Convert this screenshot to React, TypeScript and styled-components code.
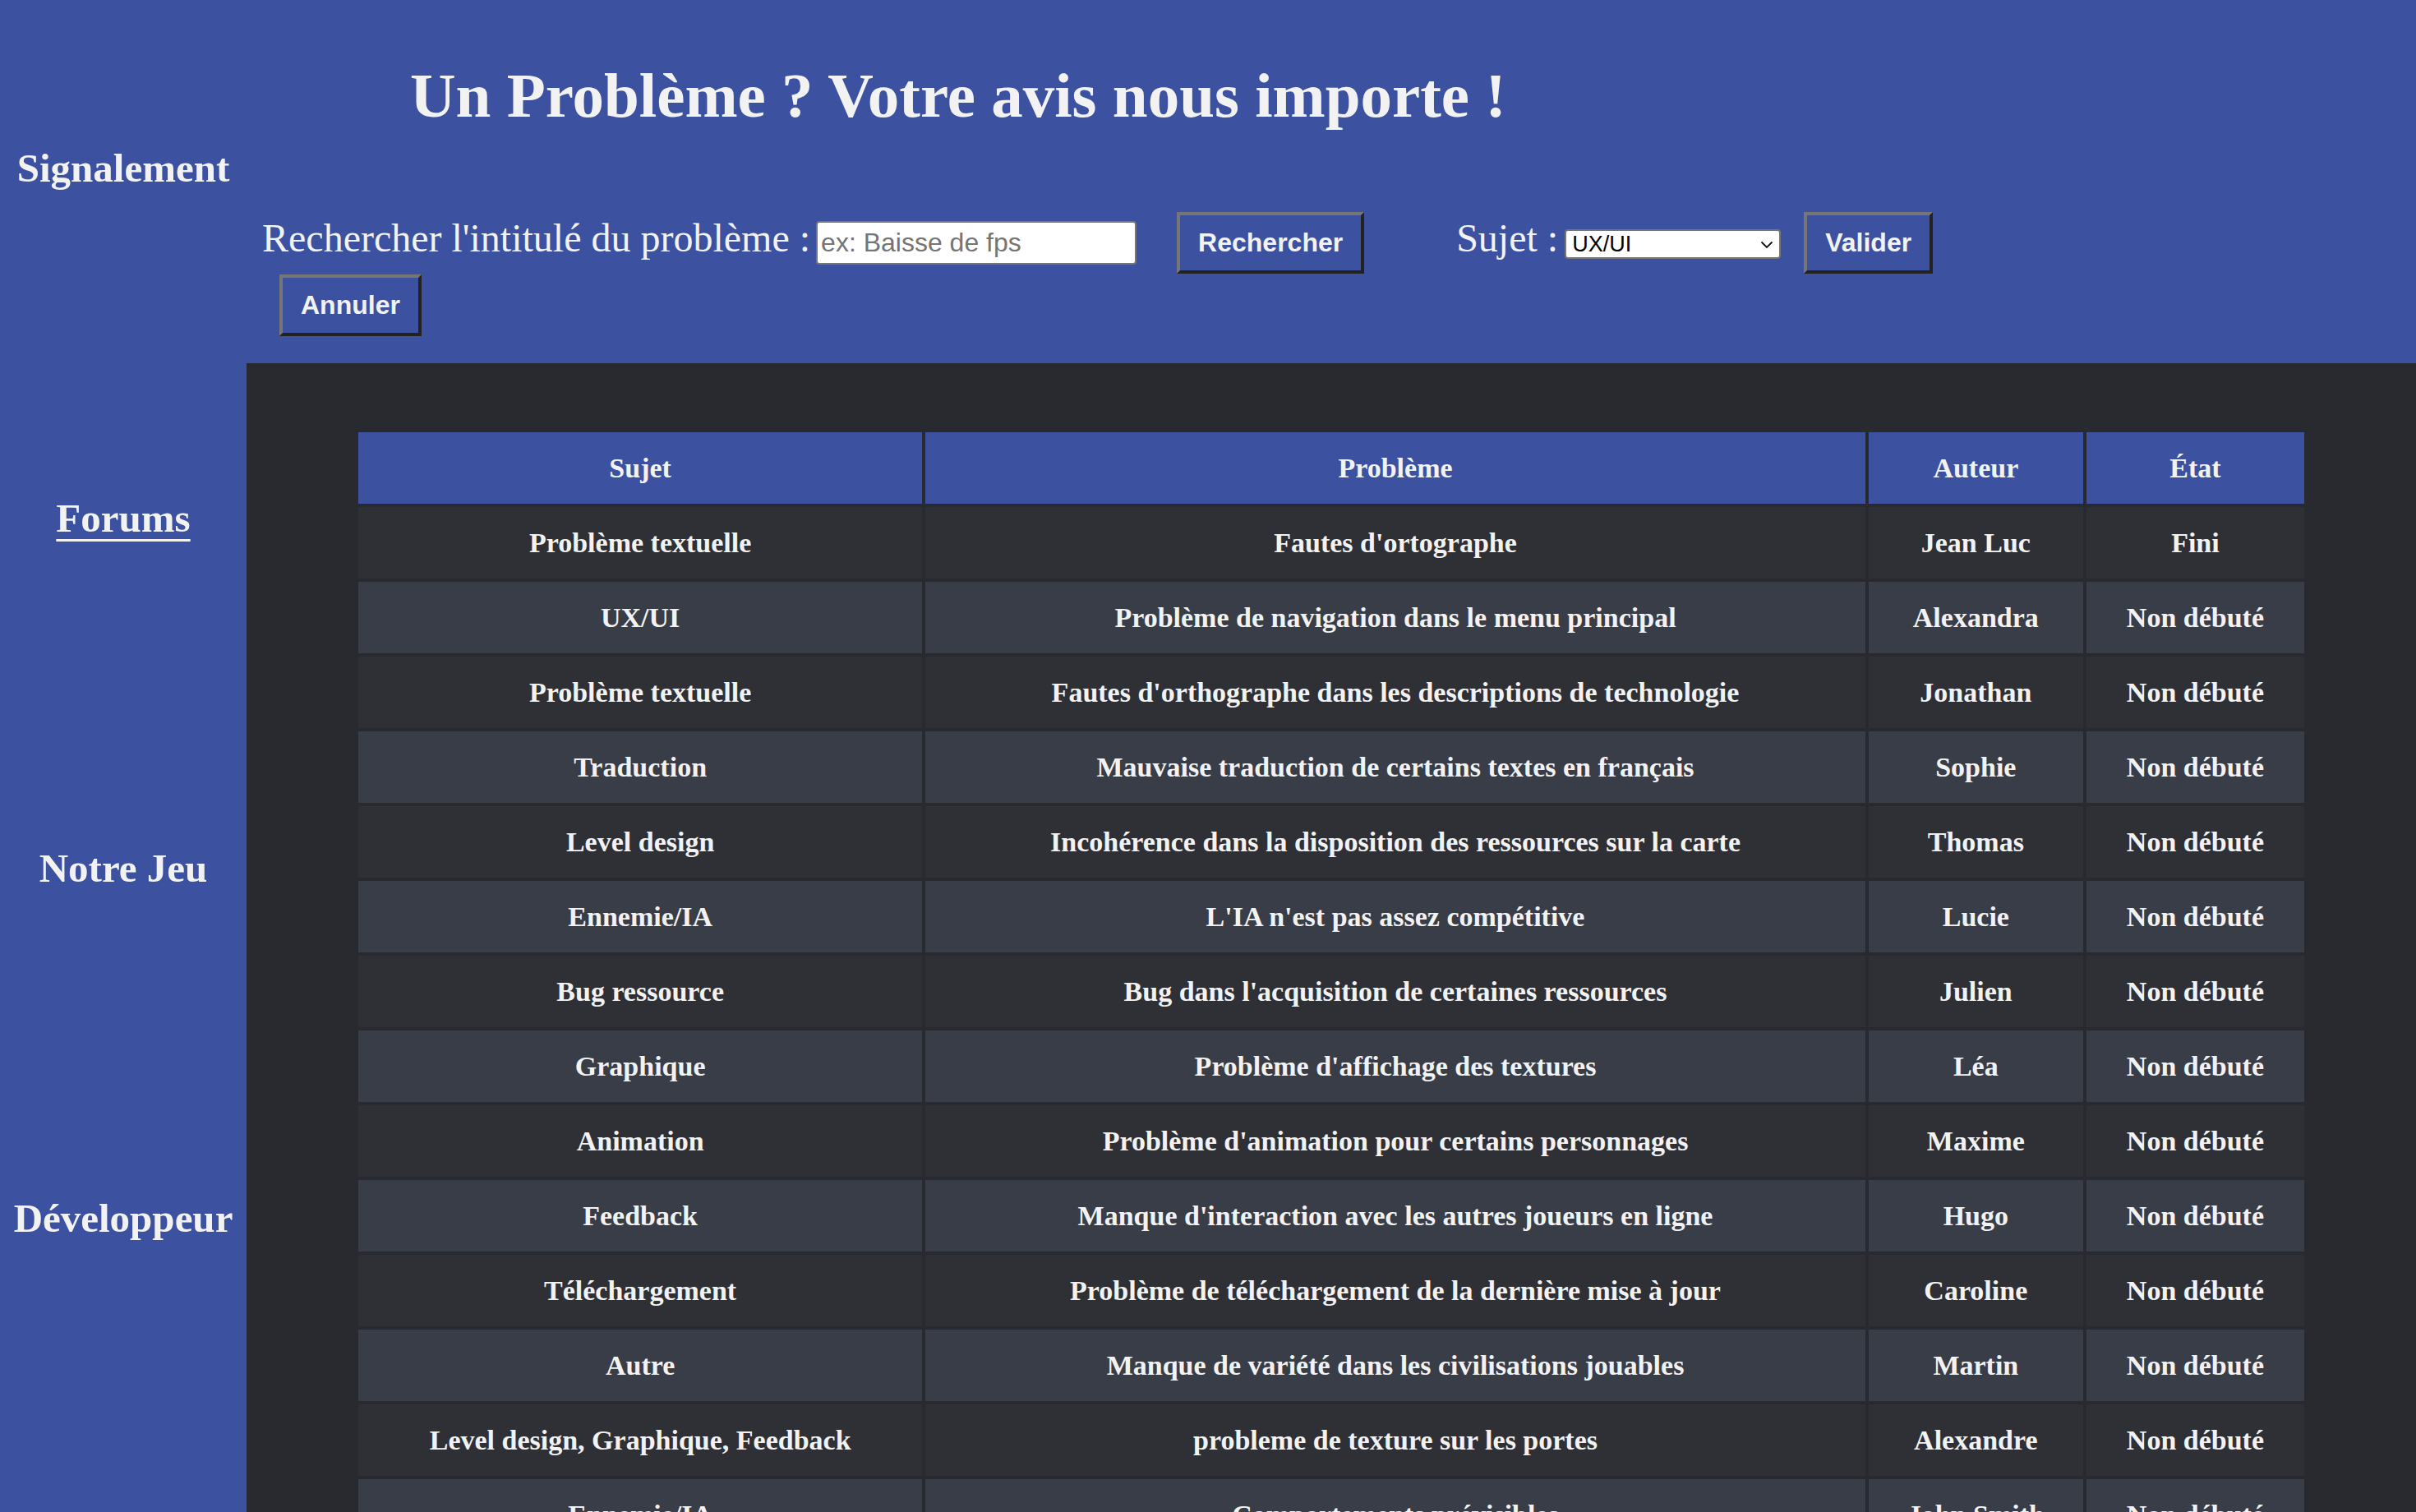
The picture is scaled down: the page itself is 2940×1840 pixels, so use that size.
import React from "react";
import styled, { createGlobalStyle } from "styled-components";

const BLUE = "#3c52a0";
const INK = "#f2f2f2";

const GlobalStyle = createGlobalStyle`
  html, body {
    margin: 0;
    padding: 0;
    background: ${BLUE};
  }
  body {
    font-family: "Liberation Serif", "Times New Roman", serif;
    color: ${INK};
  }
  * { box-sizing: border-box; }
`;

const Page = styled.div`
  display: flex;
  min-height: 100vh;
  background: ${BLUE};
`;

const Sidebar = styled.nav`
  flex: 0 0 300px;
  width: 300px;
  display: flex;
  flex-direction: column;
  align-items: center;
  gap: 370px;
  padding-top: 177px;
  background: ${BLUE};
`;

const NavLink = styled.a<{ $active?: boolean }>`
  font-family: "Liberation Serif", "Times New Roman", serif;
  font-weight: 700;
  font-size: 49px;
  line-height: 56px;
  color: ${INK};
  white-space: nowrap;
  text-decoration: ${(p) => (p.$active ? "underline" : "none")};
  text-decoration-thickness: 3px;
  text-underline-offset: 9px;
  cursor: pointer;
`;

const Main = styled.main`
  flex: 1;
  display: flex;
  flex-direction: column;
  min-width: 0;
`;

const Header = styled.header`
  padding: 78px 0 33px 19px;
  background: ${BLUE};
`;

const Title = styled.h1`
  margin: 0 0 0 180px;
  font-family: "Liberation Serif", "Times New Roman", serif;
  font-weight: 700;
  font-size: 77px;
  line-height: 76px;
  color: ${INK};
  white-space: nowrap;
`;

const FormRow = styled.div<{ $first?: boolean }>`
  display: flex;
  align-items: baseline;
  margin-top: ${(p) => (p.$first ? "104px" : "1px")};
`;

const Label = styled.label<{ $offset?: number }>`
  font-family: "Liberation Serif", "Times New Roman", serif;
  font-weight: 400;
  font-size: 48px;
  line-height: 56px;
  color: ${INK};
  white-space: nowrap;
  margin-left: ${(p) => p.$offset ?? 0}px;
`;

const TextInput = styled.input`
  width: 390px;
  height: 53px;
  margin-left: 7px;
  padding: 2px 4px;
  border: 2px solid #767676;
  border-radius: 4px;
  background: #ffffff;
  color: #111;
  font-family: "Liberation Sans", Arial, sans-serif;
  font-size: 32px;
  &::placeholder {
    color: #757575;
  }
`;

const Button = styled.button<{ $offset?: number }>`
  margin-left: ${(p) => p.$offset ?? 0}px;
  padding: 15px 22px;
  border-width: 4px;
  border-style: solid;
  border-color: #767676 #222222 #222222 #767676;
  background: ${BLUE};
  color: ${INK};
  font-family: "Liberation Sans", Arial, sans-serif;
  font-weight: 700;
  font-size: 32px;
  line-height: 37px;
  cursor: pointer;
`;

const SelectWrap = styled.span`
  position: relative;
  display: inline-flex;
  margin-left: 8px;
`;

const Select = styled.select`
  appearance: none;
  -webkit-appearance: none;
  width: 263px;
  height: 36px;
  padding: 0 30px 0 7px;
  border: 2px solid #767676;
  border-radius: 4px;
  background: #ffffff;
  color: #000;
  font-family: "Liberation Sans", Arial, sans-serif;
  font-size: 27px;
  line-height: 32px;
`;

const Chevron = styled.svg`
  position: absolute;
  right: 9px;
  top: 14px;
  width: 16px;
  height: 10px;
  pointer-events: none;
`;

const Content = styled.section`
  flex: 1;
  background: #292a2f;
  padding: 80px 132px 60px 132px;
`;

const Table = styled.table`
  width: 100%;
  table-layout: fixed;
  border-collapse: separate;
  border-spacing: 4px;
`;

const HeadCell = styled.th`
  height: 87px;
  padding: 0 8px;
  background: ${BLUE};
  color: ${INK};
  font-family: "Liberation Serif", "Times New Roman", serif;
  font-weight: 700;
  font-size: 34px;
  text-align: center;
  vertical-align: middle;
`;

const Row = styled.tr<{ $alt: boolean }>`
  background: ${(p) => (p.$alt ? "#393d47" : "#2f3036")};
`;

const Cell = styled.td`
  height: 87px;
  padding: 0 8px;
  color: ${INK};
  font-family: "Liberation Serif", "Times New Roman", serif;
  font-weight: 700;
  font-size: 34px;
  text-align: center;
  vertical-align: middle;
  white-space: nowrap;
`;

type Report = { sujet: string; probleme: string; auteur: string; etat: string };

const reports: Report[] = [
  { sujet: "Problème textuelle", probleme: "Fautes d'ortographe", auteur: "Jean Luc", etat: "Fini" },
  { sujet: "UX/UI", probleme: "Problème de navigation dans le menu principal", auteur: "Alexandra", etat: "Non débuté" },
  { sujet: "Problème textuelle", probleme: "Fautes d'orthographe dans les descriptions de technologie", auteur: "Jonathan", etat: "Non débuté" },
  { sujet: "Traduction", probleme: "Mauvaise traduction de certains textes en français", auteur: "Sophie", etat: "Non débuté" },
  { sujet: "Level design", probleme: "Incohérence dans la disposition des ressources sur la carte", auteur: "Thomas", etat: "Non débuté" },
  { sujet: "Ennemie/IA", probleme: "L'IA n'est pas assez compétitive", auteur: "Lucie", etat: "Non débuté" },
  { sujet: "Bug ressource", probleme: "Bug dans l'acquisition de certaines ressources", auteur: "Julien", etat: "Non débuté" },
  { sujet: "Graphique", probleme: "Problème d'affichage des textures", auteur: "Léa", etat: "Non débuté" },
  { sujet: "Animation", probleme: "Problème d'animation pour certains personnages", auteur: "Maxime", etat: "Non débuté" },
  { sujet: "Feedback", probleme: "Manque d'interaction avec les autres joueurs en ligne", auteur: "Hugo", etat: "Non débuté" },
  { sujet: "Téléchargement", probleme: "Problème de téléchargement de la dernière mise à jour", auteur: "Caroline", etat: "Non débuté" },
  { sujet: "Autre", probleme: "Manque de variété dans les civilisations jouables", auteur: "Martin", etat: "Non débuté" },
  { sujet: "Level design, Graphique, Feedback", probleme: "probleme de texture sur les portes", auteur: "Alexandre", etat: "Non débuté" },
  { sujet: "Ennemie/IA", probleme: "Comportements prévisibles", auteur: "John Smith", etat: "Non débuté" },
];

export default function App() {
  return (
    <>
      <GlobalStyle />
      <Page>
        <Sidebar>
          <NavLink>Signalement</NavLink>
          <NavLink $active>Forums</NavLink>
          <NavLink>Notre Jeu</NavLink>
          <NavLink>Développeur</NavLink>
        </Sidebar>
        <Main>
          <Header>
            <Title>Un Problème ? Votre avis nous importe !</Title>
            <FormRow $first>
              <Label htmlFor="search">Rechercher l'intitulé du problème :</Label>
              <TextInput id="search" type="text" placeholder="ex: Baisse de fps" />
              <Button type="button" $offset={49}>Rechercher</Button>
              <Label htmlFor="sujet" $offset={112}>Sujet :</Label>
              <SelectWrap>
                <Select id="sujet" defaultValue="UX/UI">
                  <option>UX/UI</option>
                  <option>Problème textuelle</option>
                  <option>Traduction</option>
                  <option>Level design</option>
                  <option>Ennemie/IA</option>
                  <option>Bug ressource</option>
                  <option>Graphique</option>
                  <option>Animation</option>
                  <option>Feedback</option>
                  <option>Téléchargement</option>
                  <option>Autre</option>
                </Select>
                <Chevron viewBox="0 0 16 10">
                  <path d="M1.5 1.5 L8 8 L14.5 1.5" fill="none" stroke="#111" strokeWidth="1.8" />
                </Chevron>
              </SelectWrap>
              <Button type="button" $offset={28}>Valider</Button>
            </FormRow>
            <FormRow>
              <Button type="button" $offset={21}>Annuler</Button>
            </FormRow>
          </Header>
          <Content>
            <Table>
              <colgroup>
                <col style={{ width: "686px" }} />
                <col style={{ width: "1143px" }} />
                <col style={{ width: "261px" }} />
                <col style={{ width: "265px" }} />
              </colgroup>
              <thead>
                <tr>
                  <HeadCell>Sujet</HeadCell>
                  <HeadCell>Problème</HeadCell>
                  <HeadCell>Auteur</HeadCell>
                  <HeadCell>État</HeadCell>
                </tr>
              </thead>
              <tbody>
                {reports.map((r, i) => (
                  <Row key={i} $alt={i % 2 === 1}>
                    <Cell>{r.sujet}</Cell>
                    <Cell>{r.probleme}</Cell>
                    <Cell>{r.auteur}</Cell>
                    <Cell>{r.etat}</Cell>
                  </Row>
                ))}
              </tbody>
            </Table>
          </Content>
        </Main>
      </Page>
    </>
  );
}
